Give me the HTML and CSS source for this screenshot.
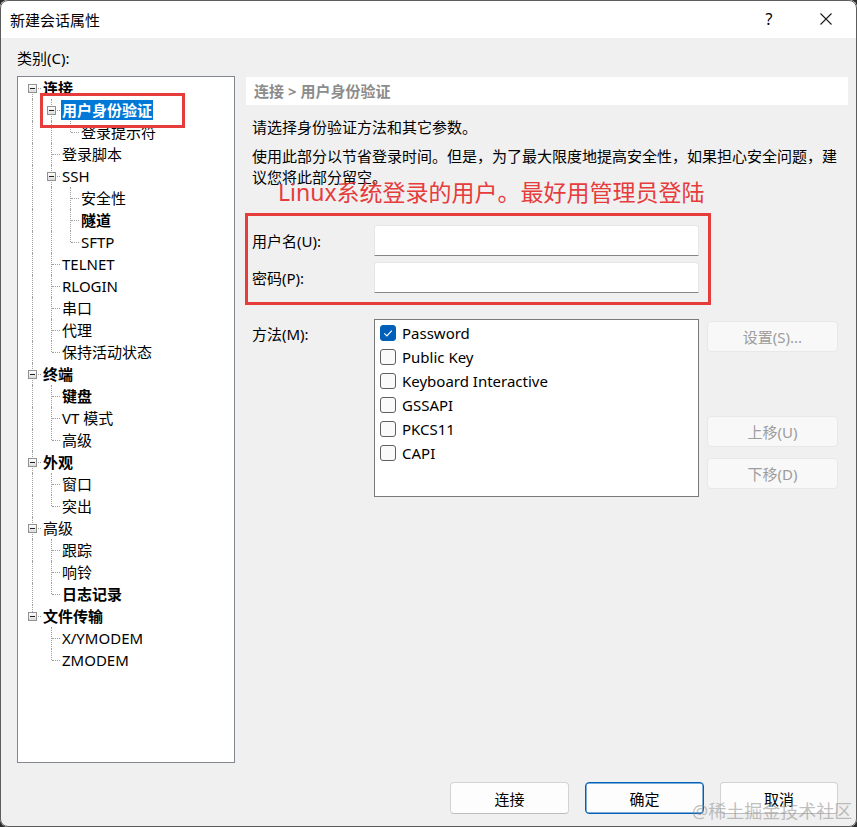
FILE: index.html
```html
<!DOCTYPE html>
<html lang="zh-CN">
<head>
    <meta charset="UTF-8">
    <meta name="viewport" content="width=device-width, initial-scale=1.0">
    <title>新建会话属性</title>
    <link rel="stylesheet" href="styles.css">
</head>
<body>
    <div class="dialog">
        <div class="titlebar">
            <span class="title">新建会话属性</span>
            <div class="title-buttons">
                <span class="help">?</span>
                <span class="close">
                    <svg width="12" height="12" viewBox="0 0 12 12"><path d="M0.5 0.5 L11.5 11.5 M11.5 0.5 L0.5 11.5" stroke="#1a1a1a" stroke-width="1.1" fill="none"/></svg>
                </span>
            </div>
        </div>

        <div class="main">
            <div class="category-label">类别(C):</div>

            <!-- 左侧类别树 -->
            <div class="tree">
                <div class="row"><span class="cell first"><i class="box"></i></span><span class="label bold">连接</span></div>
                <div class="row"><span class="cell pipe"></span><span class="cell tee"><i class="box"></i></span><span class="label bold selected">用户身份验证</span></div>
                <div class="row"><span class="cell pipe"></span><span class="cell pipe"></span><span class="cell elbow"></span><span class="label">登录提示符</span></div>
                <div class="row"><span class="cell pipe"></span><span class="cell tee"></span><span class="label">登录脚本</span></div>
                <div class="row"><span class="cell pipe"></span><span class="cell tee"><i class="box"></i></span><span class="label">SSH</span></div>
                <div class="row"><span class="cell pipe"></span><span class="cell pipe"></span><span class="cell tee"></span><span class="label">安全性</span></div>
                <div class="row"><span class="cell pipe"></span><span class="cell pipe"></span><span class="cell tee"></span><span class="label bold">隧道</span></div>
                <div class="row"><span class="cell pipe"></span><span class="cell pipe"></span><span class="cell elbow"></span><span class="label">SFTP</span></div>
                <div class="row"><span class="cell pipe"></span><span class="cell tee"></span><span class="label">TELNET</span></div>
                <div class="row"><span class="cell pipe"></span><span class="cell tee"></span><span class="label">RLOGIN</span></div>
                <div class="row"><span class="cell pipe"></span><span class="cell tee"></span><span class="label">串口</span></div>
                <div class="row"><span class="cell pipe"></span><span class="cell tee"></span><span class="label">代理</span></div>
                <div class="row"><span class="cell pipe"></span><span class="cell elbow"></span><span class="label">保持活动状态</span></div>
                <div class="row"><span class="cell tee"><i class="box"></i></span><span class="label bold">终端</span></div>
                <div class="row"><span class="cell pipe"></span><span class="cell tee"></span><span class="label bold">键盘</span></div>
                <div class="row"><span class="cell pipe"></span><span class="cell tee"></span><span class="label">VT 模式</span></div>
                <div class="row"><span class="cell pipe"></span><span class="cell elbow"></span><span class="label">高级</span></div>
                <div class="row"><span class="cell tee"><i class="box"></i></span><span class="label bold">外观</span></div>
                <div class="row"><span class="cell pipe"></span><span class="cell tee"></span><span class="label">窗口</span></div>
                <div class="row"><span class="cell pipe"></span><span class="cell elbow"></span><span class="label">突出</span></div>
                <div class="row"><span class="cell tee"><i class="box"></i></span><span class="label">高级</span></div>
                <div class="row"><span class="cell pipe"></span><span class="cell tee"></span><span class="label">跟踪</span></div>
                <div class="row"><span class="cell pipe"></span><span class="cell tee"></span><span class="label">响铃</span></div>
                <div class="row"><span class="cell pipe"></span><span class="cell elbow"></span><span class="label bold">日志记录</span></div>
                <div class="row"><span class="cell elbow"><i class="box"></i></span><span class="label bold">文件传输</span></div>
                <div class="row"><span class="cell"></span><span class="cell tee"></span><span class="label">X/YMODEM</span></div>
                <div class="row"><span class="cell"></span><span class="cell elbow"></span><span class="label">ZMODEM</span></div>
            </div>

            <!-- 右侧属性页 -->
            <div class="panel">
                <div class="crumb">连接 &gt; 用户身份验证</div>
                <p class="intro">请选择身份验证方法和其它参数。</p>
                <p class="intro hint">使用此部分以节省登录时间。但是，为了最大限度地提高安全性，如果担心安全问题，建议您将此部分留空。</p>

                <div class="field first-field">
                    <span class="field-label">用户名(U):</span>
                    <div class="textbox"></div>
                </div>
                <div class="field">
                    <span class="field-label">密码(P):</span>
                    <div class="textbox"></div>
                </div>

                <div class="methods">
                    <span class="field-label methods-label">方法(M):</span>
                    <div class="listbox">
                        <div class="option"><span class="check on"><svg width="16" height="16" viewBox="0 0 16 16"><path d="M4.3 8.4 L6.9 10.9 L11.8 5.7" stroke="#fff" stroke-width="1.2" fill="none"/></svg></span>Password</div>
                        <div class="option"><span class="check"></span>Public Key</div>
                        <div class="option"><span class="check"></span>Keyboard Interactive</div>
                        <div class="option"><span class="check"></span>GSSAPI</div>
                        <div class="option"><span class="check"></span>PKCS11</div>
                        <div class="option"><span class="check"></span>CAPI</div>
                    </div>
                    <div class="side-buttons">
                        <button class="btn disabled">设置(S)...</button>
                        <button class="btn disabled move-up">上移(U)</button>
                        <button class="btn disabled move-down">下移(D)</button>
                    </div>
                </div>
            </div>
        </div>

        <div class="footer">
            <button class="btn action">连接</button>
            <button class="btn action default">确定</button>
            <button class="btn action cancel">取消</button>
        </div>

        <!-- 截图上的标注 -->
        <div class="mark mark-tree"></div>
        <div class="mark mark-form"></div>
        <div class="note">Linux系统登录的用户。最好用管理员登陆</div>
        <div class="watermark">@稀土掘金技术社区</div>
    </div>
</body>
</html>
```

FILE: styles.css
```css
* {
    box-sizing: border-box;
}
body {
    margin: 0;
    background-color: #2b2b2b;
    font-family: "Noto Sans", "Noto Sans CJK SC", sans-serif;
    font-size: 15px;
    color: #000;
}
.dialog {
    position: relative;
    width: 857px;
    height: 827px;
    background-color: #f0f0f0;
    border-radius: 8px;
    overflow: hidden;
    outline: 1px solid #5c5c5c;
    outline-offset: -1px;
}
.titlebar {
    height: 38px;
    background-color: #fff;
    display: flex;
    align-items: center;
    justify-content: space-between;
    padding: 0 8px 0 10px;
}
.title-buttons {
    display: flex;
    align-items: center;
    height: 100%;
}
.help {
    width: 46px;
    margin-right: 11px;
    text-align: center;
    font-size: 16px;
}
.close {
    width: 46px;
    height: 100%;
    display: flex;
    align-items: center;
    justify-content: center;
}
.main {
    display: grid;
    grid-template-columns: 218px 602px;
    grid-template-rows: 28px 687px;
    column-gap: 11px;
    padding: 10px 0 0 17px;
}
.category-label {
    grid-column: 1;
    grid-row: 1;
    line-height: 20px;
}

/* tree */
.tree {
    grid-column: 1;
    grid-row: 2;
    border: 1px solid #828790;
    background-color: #fff;
    padding-left: 4px;
}
.row {
    display: flex;
    align-items: center;
    height: 22px;
}
.cell {
    position: relative;
    flex: none;
    width: 19px;
    height: 22px;
}
.cell::before,
.cell::after {
    position: absolute;
}
.cell.pipe::before,
.cell.tee::before {
    content: '';
    left: 10px;
    top: 0;
    bottom: 0;
    border-left: 1px dotted #a0a0a0;
}
.cell.first::before {
    content: '';
    left: 10px;
    top: 11px;
    bottom: 0;
    border-left: 1px dotted #a0a0a0;
}
.cell.elbow::before {
    content: '';
    left: 10px;
    top: 0;
    height: 11px;
    border-left: 1px dotted #a0a0a0;
}
.cell.tee::after,
.cell.elbow::after,
.cell.first::after {
    content: '';
    left: 11px;
    top: 11px;
    width: 8px;
    border-top: 1px dotted #a0a0a0;
}
.box {
    position: absolute;
    z-index: 1;
    left: 6px;
    top: 7px;
    width: 9px;
    height: 9px;
    border: 1px solid #919191;
    background: linear-gradient(#ffffff, #dcdcdc);
}
.box::after {
    content: '';
    position: absolute;
    left: 1px;
    top: 3px;
    width: 5px;
    height: 1px;
    background-color: #222;
}
.label {
    margin-left: 1px;
    padding: 0 1px;
    line-height: 20px;
    white-space: nowrap;
}
.label.bold {
    font-weight: bold;
}
.label.selected {
    background-color: #0078d7;
    color: #fff;
}

/* right panel */
.panel {
    grid-column: 2;
    grid-row: 2;
    padding-top: 1px;
}
.crumb {
    height: 28px;
    line-height: 28px;
    padding-left: 8px;
    background-color: #fff;
    color: #8c8c8c;
    font-weight: bold;
}
.intro {
    margin: 12px 0 0 6px;
    line-height: 21px;
}
.intro.hint {
    margin-top: 8px;
}
.field {
    display: flex;
    align-items: center;
    margin-top: 6px;
}
.field.first-field {
    margin-top: 37px;
}
.field-label {
    width: 128px;
    flex: none;
    padding-left: 6px;
}
.textbox {
    width: 325px;
    height: 31px;
    background-color: #fff;
    border: 1px solid #e6e6e6;
    border-bottom-color: #868686;
    border-radius: 3px 3px 0 0;
}
.methods {
    display: flex;
    align-items: flex-start;
    margin-top: 26px;
}
.methods-label {
    padding-top: 5px;
    line-height: 20px;
}
.listbox {
    width: 325px;
    height: 178px;
    flex: none;
    border: 1px solid #7a7a7a;
    background-color: #fff;
    padding: 1px 0 0 5px;
}
.option {
    display: flex;
    align-items: center;
    height: 24px;
    gap: 6px;
}
.check {
    width: 16px;
    height: 16px;
    border: 1px solid #5f5f5f;
    border-radius: 3px;
    background-color: #fafafa;
}
.check.on {
    border-color: #005fb8;
    background-color: #005fb8;
}
.check.on svg {
    display: block;
    margin: -1px;
}
.side-buttons {
    display: flex;
    flex-direction: column;
    margin: 2px 0 0 8px;
}
.btn {
    font-family: inherit;
    font-size: 15px;
    width: 131px;
    height: 31px;
    padding: 0;
    border-radius: 4px;
}
.btn.disabled {
    background-color: #f8f8f8;
    border: 1px solid #e8e8e8;
    color: #9d9d9d;
}
.btn.move-up {
    margin-top: 64px;
}
.btn.move-down {
    margin-top: 11px;
}

/* bottom buttons */
.footer {
    display: flex;
    justify-content: flex-end;
    gap: 16px;
    padding: 19px 19px 0 0;
}
.btn.action {
    width: 119px;
    height: 32px;
    background-color: #fdfdfd;
    border: 1px solid #d3d3d3;
    border-bottom-color: #bdbdbd;
    color: #000;
}
.btn.action.default {
    border: 1px solid #005fb8;
    box-shadow: inset 0 0 0 0.5px #005fb8;
}
.btn.action.cancel {
    width: 118px;
}

/* annotations drawn on the screenshot */
.mark {
    position: absolute;
    border: 3px solid #e63c3c;
}
.mark-tree {
    left: 40px;
    top: 93px;
    width: 145px;
    height: 35px;
}
.mark-form {
    left: 245px;
    top: 213px;
    width: 466px;
    height: 92px;
}
.note {
    position: absolute;
    left: 278px;
    top: 178px;
    font-size: 23px;
    line-height: 28px;
    color: #e63c3c;
    white-space: nowrap;
}
.watermark {
    position: absolute;
    left: 692px;
    top: 800px;
    font-size: 18px;
    line-height: 22px;
    color: rgba(140, 140, 140, 0.55);
    white-space: nowrap;
}
```
